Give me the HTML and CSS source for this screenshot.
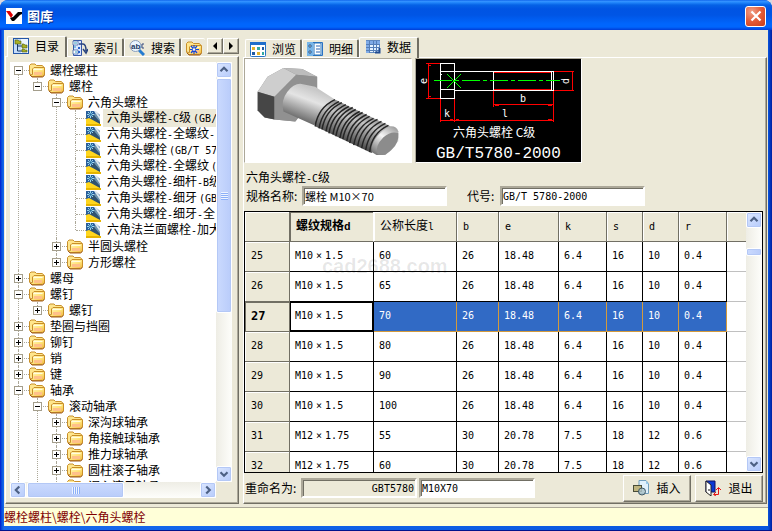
FILE: index.html
```html
<!DOCTYPE html>
<html lang="zh-CN">
<head>
<meta charset="utf-8">
<title>图库</title>
<link rel="stylesheet" href="styles.css">
</head>
<body>
<svg class="defs" width="0" height="0" aria-hidden="true">
  <defs>
    <linearGradient id="gold" x1="0" y1="0" x2="1" y2="1"><stop offset="0" stop-color="#fffbd0"/><stop offset=".55" stop-color="#ffe47a"/><stop offset="1" stop-color="#eeb33c"/></linearGradient>
    <linearGradient id="shank" x1="62" y1="28" x2="50" y2="60" gradientUnits="userSpaceOnUse"><stop offset="0" stop-color="#c8c8c8"/><stop offset=".35" stop-color="#e4e4e4"/><stop offset="1" stop-color="#686868"/></linearGradient>
    <linearGradient id="thread" x1="112" y1="48" x2="98" y2="82" gradientUnits="userSpaceOnUse"><stop offset="0" stop-color="#858585"/><stop offset=".35" stop-color="#c4c4c4"/><stop offset="1" stop-color="#4b4b4b"/></linearGradient>
    <linearGradient id="tip" x1="148" y1="66" x2="128" y2="94" gradientUnits="userSpaceOnUse"><stop offset="0" stop-color="#9a9a9a"/><stop offset=".45" stop-color="#f6f6f6"/><stop offset="1" stop-color="#777"/></linearGradient>
    <symbol id="folder" viewBox="0 0 16 16">
      <path d="M.5 12V3.500L2 2h4l1.500 1.500H13l1.500 1V7" fill="#ffe68c" stroke="#c8902c"/>
      <path d="M.5 12l2.500 2.500h10.500l2-1.500V5.500H5L3.500 7v5.500z" fill="url(#gold)" stroke="#c98f28"/>
      <path d="M1 13l2 2h10.500l2-1.500" fill="none" stroke="#a05c1c"/>
      <path d="M5 10h8v3H5z" fill="#ffc08a"/><path d="M4.500 7.500h9" stroke="#fffce0"/>
    </symbol>
    <symbol id="part" viewBox="0 0 16 16">
      <path d="M0 1h9l5 4v10H0z" fill="#2a5f9c"/><path d="M8 1h2l4 5v5z" fill="#dce8ee"/><path d="M7 4l3 0 4 6v5z" fill="#6d93ad"/><path d="M4 8l4-3 6 7v3z" fill="#2f5270"/>
      <path d="M0 9l3-1 11 6v1H0z" fill="#ffd61e"/><path d="M0 14h15v2H0z" fill="#e6b400"/>
      <path d="M4.500 1v7M1 4.500h7M2 2l5 5M7 2L2 7" stroke="#b8f4ff" stroke-width=".8"/><circle cx="4.500" cy="4.500" r="1.300" fill="#236da1"/>
    </symbol>
    <symbol id="up" viewBox="0 0 16 16"><path d="M4 9.500l4-4 4 4" fill="none" stroke="#4d6185" stroke-width="2.500"/></symbol>
    <symbol id="down" viewBox="0 0 16 16"><path d="M4 6l4 4 4-4" fill="none" stroke="#4d6185" stroke-width="2.500"/></symbol>
    <symbol id="left" viewBox="0 0 16 16"><path d="M9.500 4l-4 4 4 4" fill="none" stroke="#4d6185" stroke-width="2.500"/></symbol>
    <symbol id="right" viewBox="0 0 16 16"><path d="M6 4l4 4-4 4" fill="none" stroke="#4d6185" stroke-width="2.500"/></symbol>
  </defs>
</svg>

<div class="window">
  <header class="titlebar">
    <svg class="logo" viewBox="0 0 16 16" aria-hidden="true"><path fill="#fff" d="M0 0h16v16H0z"/><path d="M0 3h4l3 4-2 3z" fill="#e00000"/><path d="M4 10l3-1 5-5h4v2l-2 1-6 6H6z" fill="#000"/></svg>
    <h1>图库</h1>
    <button class="close" type="button" aria-label="关闭"><svg viewBox="0 0 18 18"><path d="M4.500 4.500l9 9M13.500 4.500l-9 9" stroke="#fff" stroke-width="2.200"/></svg></button>
  </header>

  <main class="workspace">
    <section class="sidebar">
      <div class="tabs" role="tablist">
        <button class="tab selected" type="button" role="tab">
          <svg class="icon" viewBox="0 0 16 16"><rect x=".5" y=".5" width="15" height="15" fill="#c4dcfa" stroke="#2456a8"/><path d="M8 1h7v14H8z" fill="#edf5ff"/><path d="M4.500 5v8H9M4.500 8H9" fill="none" stroke="#173865"/><path d="M2 2h3l1 1h2v3H2zM9 6h2l1 1h2v3H9zM9 11h2l1 1h2v2H9z" fill="#a8af24" stroke="#4c5c19" stroke-width=".6"/></svg><span>目录</span></button>
        <button class="tab" type="button" role="tab">
          <svg class="icon" viewBox="0 0 16 16"><path d="M1.500.5h8v15h-8z" fill="#dae6ff" stroke="#3657a8"/><path d="M1 1h5v4H1zM1 10h5v4H1z" fill="#fff" stroke="#3f64aa" stroke-width=".8"/><path d="M2 3h3M3 6v2M3 12h2" stroke="#289bc3"/><path d="M7 4h4c2 0 3 2 3 7M11 9l3 4 2-4" fill="none" stroke="#29447e" stroke-width="1.500"/><path d="M6 7h2v2H6zM6 11h2v2H6z" fill="#2660ca"/></svg><span>索引</span></button>
        <button class="tab" type="button" role="tab">
          <svg class="icon" viewBox="0 0 16 16"><path d="M9 9l6 6" stroke="#247bd0" stroke-width="3"/><circle cx="6.500" cy="6" r="5.500" fill="#e9f5ff" stroke="#8b9eba"/><text class="abc" x="2" y="9">ab</text><path d="M15 4h-2v4h2" fill="none" stroke="#354b7e"/></svg><span>搜索</span></button>
        <button class="tab clipped" type="button" role="tab" aria-label="收藏">
          <svg class="icon" viewBox="0 0 16 16"><use href="#folder"/><path d="M8 5v9M4 9.500h9M5 6l6 7M11 6l-6 7" stroke="#1749d5" stroke-width="1.200"/><circle cx="8" cy="9.500" r="1.200" fill="#fff"/></svg></button>
        <div class="tab-scroll">
          <button type="button" aria-label="向左"><svg viewBox="0 0 12 12"><path d="M8 2v8L4 6z"/></svg></button>
          <button type="button" aria-label="向右"><svg viewBox="0 0 12 12"><path d="M4 2v8l4-4z"/></svg></button>
        </div>
      </div>
      <div class="panel tree-panel">
        <nav class="tree" aria-label="目录">
          <ul class="root">
            <li><div class="row"><button type="button" class="minus" aria-label="折叠"></button><svg class="icon"><use href="#folder"/></svg><span>螺栓螺柱</span></div>
              <ul>
                <li><div class="row"><button type="button" class="minus" aria-label="折叠"></button><svg class="icon"><use href="#folder"/></svg><span>螺栓</span></div>
                  <ul>
                    <li><div class="row"><button type="button" class="minus" aria-label="折叠"></button><svg class="icon"><use href="#folder"/></svg><span>六角头螺栓</span></div>
                      <ul>
                        <li><div class="row leaf current"><svg class="icon"><use href="#part"/></svg><span>六角头螺栓<i>-C</i>级<i class="paren">(GB/</i></span></div></li>
                        <li><div class="row leaf"><svg class="icon"><use href="#part"/></svg><span>六角头螺栓<i>-</i>全螺纹<i>-</i></span></div></li>
                        <li><div class="row leaf"><svg class="icon"><use href="#part"/></svg><span>六角头螺栓<i class="paren">(GB/T 57</i></span></div></li>
                        <li><div class="row leaf"><svg class="icon"><use href="#part"/></svg><span>六角头螺栓<i>-</i>全螺纹<i class="paren">(</i></span></div></li>
                        <li><div class="row leaf"><svg class="icon"><use href="#part"/></svg><span>六角头螺栓<i>-</i>细杆<i>-B</i>级</span></div></li>
                        <li><div class="row leaf"><svg class="icon"><use href="#part"/></svg><span>六角头螺栓<i>-</i>细牙<i class="paren">(GB</i></span></div></li>
                        <li><div class="row leaf"><svg class="icon"><use href="#part"/></svg><span>六角头螺栓<i>-</i>细牙<i>-</i>全</span></div></li>
                        <li><div class="row leaf"><svg class="icon"><use href="#part"/></svg><span>六角法兰面螺栓<i>-</i>加大</span></div></li>
                      </ul></li>
                    <li><div class="row"><button type="button" class="plus" aria-label="展开"></button><svg class="icon"><use href="#folder"/></svg><span>半圆头螺栓</span></div></li>
                    <li><div class="row"><button type="button" class="plus" aria-label="展开"></button><svg class="icon"><use href="#folder"/></svg><span>方形螺栓</span></div></li>
                  </ul></li>
              </ul></li>
            <li><div class="row"><button type="button" class="plus" aria-label="展开"></button><svg class="icon"><use href="#folder"/></svg><span>螺母</span></div></li>
            <li><div class="row"><button type="button" class="minus" aria-label="折叠"></button><svg class="icon"><use href="#folder"/></svg><span>螺钉</span></div>
              <ul><li><div class="row"><button type="button" class="plus" aria-label="展开"></button><svg class="icon"><use href="#folder"/></svg><span>螺钉</span></div></li></ul></li>
            <li><div class="row"><button type="button" class="plus" aria-label="展开"></button><svg class="icon"><use href="#folder"/></svg><span>垫圈与挡圈</span></div></li>
            <li><div class="row"><button type="button" class="plus" aria-label="展开"></button><svg class="icon"><use href="#folder"/></svg><span>铆钉</span></div></li>
            <li><div class="row"><button type="button" class="plus" aria-label="展开"></button><svg class="icon"><use href="#folder"/></svg><span>销</span></div></li>
            <li><div class="row"><button type="button" class="plus" aria-label="展开"></button><svg class="icon"><use href="#folder"/></svg><span>键</span></div></li>
            <li class="more"><div class="row"><button type="button" class="minus" aria-label="折叠"></button><svg class="icon"><use href="#folder"/></svg><span>轴承</span></div>
              <ul>
                <li class="more"><div class="row"><button type="button" class="minus" aria-label="折叠"></button><svg class="icon"><use href="#folder"/></svg><span>滚动轴承</span></div>
                  <ul>
                    <li><div class="row"><button type="button" class="plus" aria-label="展开"></button><svg class="icon"><use href="#folder"/></svg><span>深沟球轴承</span></div></li>
                    <li><div class="row"><button type="button" class="plus" aria-label="展开"></button><svg class="icon"><use href="#folder"/></svg><span>角接触球轴承</span></div></li>
                    <li><div class="row"><button type="button" class="plus" aria-label="展开"></button><svg class="icon"><use href="#folder"/></svg><span>推力球轴承</span></div></li>
                    <li><div class="row"><button type="button" class="plus" aria-label="展开"></button><svg class="icon"><use href="#folder"/></svg><span>圆柱滚子轴承</span></div></li>
                    <li class="more"><div class="row"><button type="button" class="plus" aria-label="展开"></button><svg class="icon"><use href="#folder"/></svg><span>调心滚子轴承</span></div></li>
                  </ul></li>
              </ul></li>
          </ul>
        </nav>
        <div class="scroll vertical"><button type="button" aria-label="向上"><svg><use href="#up"/></svg></button><div class="thumb tree-thumb"></div><button type="button" class="end" aria-label="向下"><svg><use href="#down"/></svg></button></div>
        <div class="scroll horizontal"><button type="button" aria-label="向左滚动"><svg><use href="#left"/></svg></button><div class="thumb wide-thumb"></div><button type="button" class="end" aria-label="向右滚动"><svg><use href="#right"/></svg></button></div>
      </div>
    </section>

    <section class="content">
      <div class="tabs content-tabs" role="tablist">
        <button class="tab" type="button" role="tab"><svg class="icon" viewBox="0 0 16 16"><rect x=".5" y="1.500" width="15" height="14" rx="1" fill="#fff" stroke="#2474c6"/><path d="M0 1h16v3H0z" fill="#1f6fcb"/><path d="M2 6h3v3H2zM7 11h3v3H7z" fill="#e2b32a"/><path d="M7 6h3v3H7zM12 11h2v3h-2z" fill="#31a9a2"/><path d="M12 6h2v3h-2zM2 11h3v3H2z" fill="#205ba3"/></svg><span>浏览</span></button>
        <button class="tab" type="button" role="tab"><svg class="icon" viewBox="0 0 16 16"><path d="M.5 1.500h15v13H.5z" fill="#e8f3ff" stroke="#2a72c3"/><path d="M0 1h6v14H0z" fill="#76b5e9"/><path d="M7 2h7v12H7z" fill="#fff" stroke="#2472ba"/><path d="M9 5h4M9 8h4M9 11h4" stroke="#2a65b2"/><path d="M2 4h2v2H2zM2 10h2v2H2z" fill="#fff" stroke="#153f72" stroke-width=".8"/></svg><span>明细</span></button>
        <button class="tab selected" type="button" role="tab"><svg class="icon" viewBox="0 0 16 16"><rect x="1.500" y="1.500" width="13" height="12" fill="#e5f3ff" stroke="#6089c0"/><path d="M1 2h14v3H1zM1 5h3v9H1z" fill="#7fabe7"/><path d="M1 5.500h14M1 8.500h14M1 11.500h14M4.500 2v12M8.500 2v12M11.500 2v12" stroke="#557fb8"/><path d="M10 13.500h4.500V9" fill="none" stroke="#1f4b91" stroke-width="2"/></svg><span>数据</span></button>
      </div>
      <div class="panel data-panel">
        <div class="previews">
          <figure><svg viewBox="0 0 166 104" role="img" aria-label="螺栓">
            <path d="M12 33l10-15 16-9 19 1 15 8v17L50 63l-21-2-10-2-7-7z" fill="#8c8c8c"/>
            <path d="M12 33l10-15 16-9 13 7-22 22z" fill="#cecece"/><path d="M38 9l19 1 15 8-21-2z" fill="#bcbcbc"/>
            <path d="M12 33l17 5v23l-10-2-7-7z" fill="#464646"/><path d="M29 38l22-22 21 2v17L50 63l-21-2z" fill="#919191"/>
            <path d="M55 25l15 3 20 13-21 26-31-14q-3-11 4-20 6-8 13-8z" fill="url(#shank)"/>
            <path d="M90 41l56 27-19 27-57-27q1-18 20-27z" fill="url(#thread)"/>
            <g fill="none" stroke="#252525" stroke-width="1.500"><path d="M90 41q-17 8-20 27"/><path d="M94 43q-17 8-20 27"/><path d="M97 44q-17 8-20 27"/><path d="M101 46q-17 8-20 27"/><path d="M104 48q-17 8-20 27"/><path d="M108 49q-17 8-20 27"/><path d="M111 51q-17 8-20 27"/><path d="M115 53q-17 8-20 27"/><path d="M118 54q-17 8-20 27"/><path d="M122 56q-17 8-20 27"/><path d="M125 58q-17 8-20 27"/><path d="M129 60q-17 8-20 27"/><path d="M133 61q-17 8-20 27"/><path d="M137 63q-17 8-20 27"/><path d="M141 65q-17 8-20 27"/><path d="M144 67q-17 8-19 27"/></g>
            <path d="M145 68q7-1 9 5v10l-13 14h-9l-5-3q-2-13 18-26z" fill="url(#tip)"/>
            <path d="M154 75q1 10-7 17-7 7-14 4-3-8 6-17 8-7 15-4z" fill="#8c8c8c"/>
          </svg></figure>
          <figure class="drawing"><svg viewBox="0 0 165 103" role="img" aria-label="六角头螺栓 C级">
            <g fill="none" shape-rendering="crispEdges">
              <path stroke="#f00" d="M12.500 4v36M10 4.500h15M10 39.500h15M24.500 40v23M38.500 40v23M24 61.500h114M137.500 31v32M77.500 31v17M77 45.500h60M77 13.500h58M77 30.500h58M138 12.500h20M138 31.500h20M156.500 12v20M12.500 6h2M12.500 37h2M79 46.500h4M132 46.500h4M40 60.500h3M132 60.500h4M34 60.500h3"/>
              <path stroke="#fff" d="M24.500 4.500h14v35h-14zM24.500 12.500h113v19H38M24.500 30.500h14M77.500 12v20M135.500 12v20M24 12v3h2"/>
              <path stroke="#0f0" stroke-dasharray="18 3 4 3" d="M18 21.500h126"/>
            </g>
            <path stroke="#0f0" d="M31 15l14 14M45 15L31 29"/>
            <g class="cad"><text x="28" y="58">k</text><text x="86" y="58">l</text><text x="104" y="43">b</text><text x="0" y="0" transform="translate(11 25) rotate(-90)">e</text><text x="0" y="0" transform="translate(153 25) rotate(-90)">d</text><text class="caption" x="37" y="78">六角头螺栓 C级</text><text class="code" x="20" y="99">GB/T5780-2000</text></g>
          </svg></figure>
        </div>
        <div class="fields">
          <div class="part-name">六角头螺栓<i>-C</i>级</div>
          <div class="field-row"><label for="name">规格名称:</label><input id="name" class="spec" value="螺栓 M10×70"><label class="code-label" for="code">代号:</label><input id="code" value="GB/T 5780-2000"></div>
        </div>
        <div class="grid">
          <div class="grid-body">
          <table>
            <colgroup><col class="c0"><col class="c1"><col class="c2"><col class="c3"><col class="c4"><col class="c5"><col class="c6"><col class="c6"><col class="c5"><col></colgroup>
            <thead><tr><th></th><th class="active">螺纹规格<b>d</b></th><th>公称长度<i>l</i></th><th><i>b</i></th><th><i>e</i></th><th><i>k</i></th><th><i>s</i></th><th><i>d</i></th><th><i>r</i></th><th></th></tr></thead>
            <tbody>
              <tr><th>25</th><td>M10<s>×</s>1.5</td><td>60</td><td>26</td><td>18.48</td><td>6.4</td><td>16</td><td>10</td><td>0.4</td><td></td></tr>
              <tr><th>26</th><td>M10<s>×</s>1.5</td><td>65</td><td>26</td><td>18.48</td><td>6.4</td><td>16</td><td>10</td><td>0.4</td><td></td></tr>
              <tr class="chosen"><th>27</th><td class="focus">M10<s>×</s>1.5</td><td>70</td><td>26</td><td>18.48</td><td>6.4</td><td>16</td><td>10</td><td>0.4</td><td></td></tr>
              <tr><th>28</th><td>M10<s>×</s>1.5</td><td>80</td><td>26</td><td>18.48</td><td>6.4</td><td>16</td><td>10</td><td>0.4</td><td></td></tr>
              <tr><th>29</th><td>M10<s>×</s>1.5</td><td>90</td><td>26</td><td>18.48</td><td>6.4</td><td>16</td><td>10</td><td>0.4</td><td></td></tr>
              <tr><th>30</th><td>M10<s>×</s>1.5</td><td>100</td><td>26</td><td>18.48</td><td>6.4</td><td>16</td><td>10</td><td>0.4</td><td></td></tr>
              <tr><th>31</th><td>M12<s>×</s>1.75</td><td>55</td><td>30</td><td>20.78</td><td>7.5</td><td>18</td><td>12</td><td>0.6</td><td></td></tr>
              <tr><th>32</th><td>M12<s>×</s>1.75</td><td>60</td><td>30</td><td>20.78</td><td>7.5</td><td>18</td><td>12</td><td>0.6</td><td></td></tr>
            </tbody>
          </table>
          </div>
          <div class="scroll vertical"><button type="button" aria-label="向上"><svg><use href="#up"/></svg></button><div class="thumb small-thumb"></div><button type="button" class="end" aria-label="向下"><svg><use href="#down"/></svg></button></div>
          <span class="watermark">cad2688.com</span>
        </div>
        <div class="actions">
          <label for="prefix">重命名为:</label><input id="prefix" class="prefix" value="GBT5780" readonly><input class="rename" aria-label="新名称" value="M10X70">
          <button class="command first" type="button"><svg class="icon" viewBox="0 0 16 16"><path d="M6 .5h7l2.500 3v10H6z" fill="#dff0fc" stroke="#709ebd"/><path d="M13 1v3h3" fill="#98c9e9"/><rect x=".5" y="5.500" width="8" height="6" fill="#bfb580" stroke="#494d38"/><circle cx="9" cy="11.500" r="3.500" fill="#aac2c9" fill-opacity=".85" stroke="#3e5865"/></svg><span>插入</span></button>
          <button class="command" type="button"><svg class="icon" viewBox="0 0 16 16"><path d="M1 1h9v11H1z" fill="#0b38d4" stroke="#101060"/><path d="M1 1l5 4v11l-5-4z" fill="#fff" stroke="#222"/><path d="M4 9v2" stroke="#111"/><path d="M9 14.500h4.500V8M11 10l2.500-2.500L16 10M11 12l-2.500 2.500L11 16" fill="none" stroke="#e51616"/></svg><span>退出</span></button>
        </div>
      </div>
    </section>
  </main>
  <footer class="status">螺栓螺柱\螺栓\六角头螺栓</footer>
</div>
</body>
</html>
```
FILE: styles.css
```css
:root {
  --face: #ece9d8;
  --shade: #716f64;
  --soft: #aca899;
  --cjk: "Noto Sans CJK SC", sans-serif;
  --mono: "DejaVu Sans Mono", "Noto Sans CJK SC", monospace;
}
* { box-sizing: border-box; }
body { margin: 0; background: #d8d8e0; color: #000; font: 12px/16px var(--cjk); }
button, input { font: inherit; color: inherit; margin: 0; }
button { padding: 0; border: 0; background: none; }
ul { list-style: none; margin: 0; padding: 0; }
i { font: normal 10px/16px var(--mono); }
.defs { position: absolute; }
.icon { width: 16px; height: 16px; flex: none; display: block; }

.window {
  height: 100vh; display: flex; flex-direction: column; overflow: hidden;
  padding: 0 4px 4px; border-radius: 8px 8px 0 0;
  background: linear-gradient(90deg, #0019cf 0, #0855dd 2px, #166aee 4px, #0855dd calc(100% - 4px), #001ea0 100%);
  border-bottom: 1px solid #00138c;
}
.titlebar {
  flex: none; height: 30px; margin: 0 -4px; padding: 2px 6px 0; display: flex; align-items: center; gap: 5px;
  background: linear-gradient(#0058e6 0, #3a93ff 1px, #288eff 2px, #0562e6 5px, #0054e3 9px, #0055e5 15px, #0066fd 24px, #0066fd 27px, #003dd7 30px);
}
.titlebar h1 { margin: 0; flex: 1; color: #fff; font-size: 13px; font-weight: bold; text-shadow: 1px 1px #0a2a80; }
.logo { width: 16px; height: 16px; }
.close {
  width: 21px; height: 21px; border: 1px solid #fff; border-radius: 3px; display: grid; place-items: center;
  background: radial-gradient(circle at 30% 25%, #f0a088, #e25b38 50%, #c73c18);
}
.close svg { width: 18px; height: 18px; }

.workspace { flex: 1; min-height: 0; display: flex; gap: 4px; padding: 6px 1px 3px; background: var(--face); }
.sidebar { width: 234px; flex: none; display: flex; flex-direction: column; }
.content { flex: 1; min-width: 0; display: flex; flex-direction: column; }

.tabs { position: relative; flex: none; height: 20px; padding-left: 2px; display: flex; align-items: flex-end; }
.content-tabs { height: 21px; }
.tab {
  display: flex; align-items: center; gap: 6px; height: 18px; width: 57px; padding-left: 4px; white-space: nowrap;
  border: 1px solid #fff; border-right: 2px solid var(--shade); border-bottom: 0; border-radius: 2px 2px 0 0;
  background: var(--face); flex: none;
}
.tab.selected { height: 21px; width: 60px; margin-bottom: -1px; padding: 0 0 3px 5px; z-index: 1; }
.tab.clipped { width: 24px; border-right: 0; }
.abc { font: bold 8px "Liberation Sans", sans-serif; fill: #243b64; }
.tab-scroll { position: absolute; right: 0; top: 2px; display: flex; }
.tab-scroll button {
  width: 16px; height: 16px; display: grid; place-items: center; background: var(--face);
  border: 1px solid; border-color: #fff var(--shade) var(--shade) #fff; box-shadow: inset -1px -1px var(--soft);
}
.tab-scroll svg { width: 12px; height: 12px; }

.panel {
  flex: 1; min-height: 0; border: 1px solid; border-color: #fff var(--shade) var(--shade) #fff;
  box-shadow: inset -1px -1px var(--soft);
}
.tree-panel {
  display: grid; grid-template: minmax(0, 1fr) 16px / minmax(0, 1fr) 16px; padding: 5px 6px 5px 4px;
}
.tree { background: #fff; overflow: hidden; }
.scroll.vertical { grid-column: 2; }
.tree li { position: relative; }
.tree li ul { margin-left: 19px; }
.tree li::before { content: ""; position: absolute; left: 8px; top: 0; bottom: 0; border-left: 1px dotted var(--soft); }
.tree li:last-child:not(.more)::before { bottom: auto; height: 8px; }
.root > li:first-child::before { top: 8px; }
.tree li::after { content: ""; position: absolute; left: 9px; top: 8px; width: 10px; border-top: 1px dotted var(--soft); }
.row { display: flex; align-items: center; height: 16px; padding-left: 4px; white-space: nowrap; }
.row button {
  position: relative; z-index: 1; width: 9px; height: 9px; margin-right: 6px; flex: none; border: 1px solid #a49e8c;
  background: linear-gradient(#000, #000) center / 5px 1px no-repeat, #fff;
}
.row .plus { background: linear-gradient(#000, #000) center / 5px 1px no-repeat, linear-gradient(#000, #000) center / 1px 5px no-repeat, #fff; }
.row span { padding-left: 4px; }
.row.leaf { padding-left: 19px; }
.row .icon + span { margin-left: 1px; }
.current span { flex: 1; background: var(--face); }
.paren { padding-left: 2px; }

.scroll { background: linear-gradient(90deg, #eeede5, #fefefb); display: flex; overflow: hidden; }
.scroll.vertical { flex-direction: column; width: 16px; }
.scroll.horizontal { grid-column: 1; background: linear-gradient(#eeede5, #fefefb); }
.scroll button, .thumb { border: 1px solid #fff; border-radius: 2px; flex: none; box-shadow: inset 0 0 0 1px #b4c8f6; background: #c6d6fd; }
.scroll button { width: 16px; height: 16px; background: linear-gradient(135deg, #dce7ff, #b6cbfb); }
.scroll button svg { width: 14px; height: 14px; display: block; }
.scroll .end { margin-top: auto; }
.horizontal .end { margin: 0 0 0 auto; }
.thumb { display: grid; place-items: center; background: linear-gradient(90deg, #cbdafe, #b9ccfa); }
.thumb::before { content: ""; }
.tree-thumb { height: 56%; }
.wide-thumb { width: 97px; margin-left: 1px; background: linear-gradient(#cbdafe, #b9ccfa); }
.tree-thumb::before { width: 7px; height: 8px; background: repeating-linear-gradient(#eef4ff 0 1px, #8cb0f8 1px 2px); }
.wide-thumb::before { width: 8px; height: 7px; background: repeating-linear-gradient(90deg, #eef4ff 0 1px, #8cb0f8 1px 2px); }
.small-thumb { height: 8px; margin-top: 20px; }

.data-panel { display: flex; flex-direction: column; padding-right: 3px; }
.previews { display: flex; gap: 3px; flex: none; }
figure { margin: 0; width: 168px; height: 105px; background: #fff; border: 1px solid; border-color: var(--soft) #fff #fff var(--soft); overflow: hidden; }
figure svg { display: block; width: 166px; height: 103px; }
.drawing { background: #000; width: 167px; }
.drawing svg { width: 165px; }
.cad { fill: #fff; font: 10px var(--mono); }
.caption { font: 12px var(--cjk); }
.code { font: 16px "Liberation Mono", monospace; }
.fields { flex: none; padding: 5px 2px 5px; }
.part-name { height: 18px; line-height: 18px; }
.field-row { display: flex; align-items: center; height: 20px; }
.field-row label { width: 56px; }
.field-row .code-label { width: 33px; margin-left: 20px; }
input {
  width: 145px; height: 20px; padding: 0 1px; border: 2px solid; border-color: var(--soft) #fff #fff var(--soft); border-radius: 0;
  box-shadow: inset 1px 1px var(--shade); background: #fff; font: 10px/16px var(--mono); outline: 0;
}
.field-row .spec { font: 11px/16px var(--cjk); }

.grid { position: relative; flex: 1; min-height: 0; display: flex; border: 1px solid #000; overflow: hidden; background: #fff; }
.grid-body { flex: 1; min-width: 0; overflow: hidden; }
table { width: 100%; table-layout: fixed; border-collapse: separate; border-spacing: 0; }
.c0 { width: 45px; } .c1 { width: 84px; } .c2 { width: 83px; } .c3 { width: 42px; }
.c4 { width: 60px; } .c5 { width: 48px; } .c6 { width: 36px; }
th, td { height: 30px; padding: 0 0 2px 5px; text-align: left; font: 10px/16px var(--mono); white-space: nowrap; border: 0 solid #000; border-width: 0 1px 1px 0; }
td { background: #fff; }
th { padding-left: 6px; background: var(--face); border-color: var(--shade); box-shadow: inset 1px 1px #fff; }
thead th { font: 12px/16px var(--cjk); }
thead .active { font-weight: bold; border-right-color: #fff; box-shadow: inset 1px 1px var(--shade); }
thead b { font: bold 11px/16px "Liberation Mono", monospace; }
td:last-child { border-color: #c0c0c0; border-right: 0; }
th:last-child { border-right: 0; }
s { text-decoration: none; padding: 0 3px; }
.chosen th { font-weight: bold; font-size: 12px; box-shadow: inset 1px 1px var(--shade); }
.chosen td:not(:last-child) { background: #316ac5; color: #fff; border-color: #d39a3c; }
.chosen td.focus:not(:last-child) { background: #fff; color: #000; border-color: #000; box-shadow: inset 0 0 0 1px #000; }
.watermark { position: absolute; left: 77px; top: 43px; color: #00000018; font: bold 20px/22px "Liberation Sans", sans-serif; pointer-events: none; }

.actions { flex: none; display: flex; align-items: center; height: 30px; padding-left: 1px; }
.actions label { width: 56px; }
.actions input { width: 116px; flex: none; }
.actions .prefix { background: var(--face); text-align: right; margin-right: 2px; }
.command {
  width: 68px; height: 27px; display: flex; align-items: center; justify-content: center; gap: 7px;
  border: 1px solid; border-color: #fff var(--shade) var(--shade) #fff; box-shadow: inset -1px -1px var(--soft);
}
.command.first { margin: 0 4px 0 auto; }
.status { flex: none; height: 19px; border-top: 1px solid var(--soft); background: #ffffd8; color: #800000; line-height: 18px; }
```
